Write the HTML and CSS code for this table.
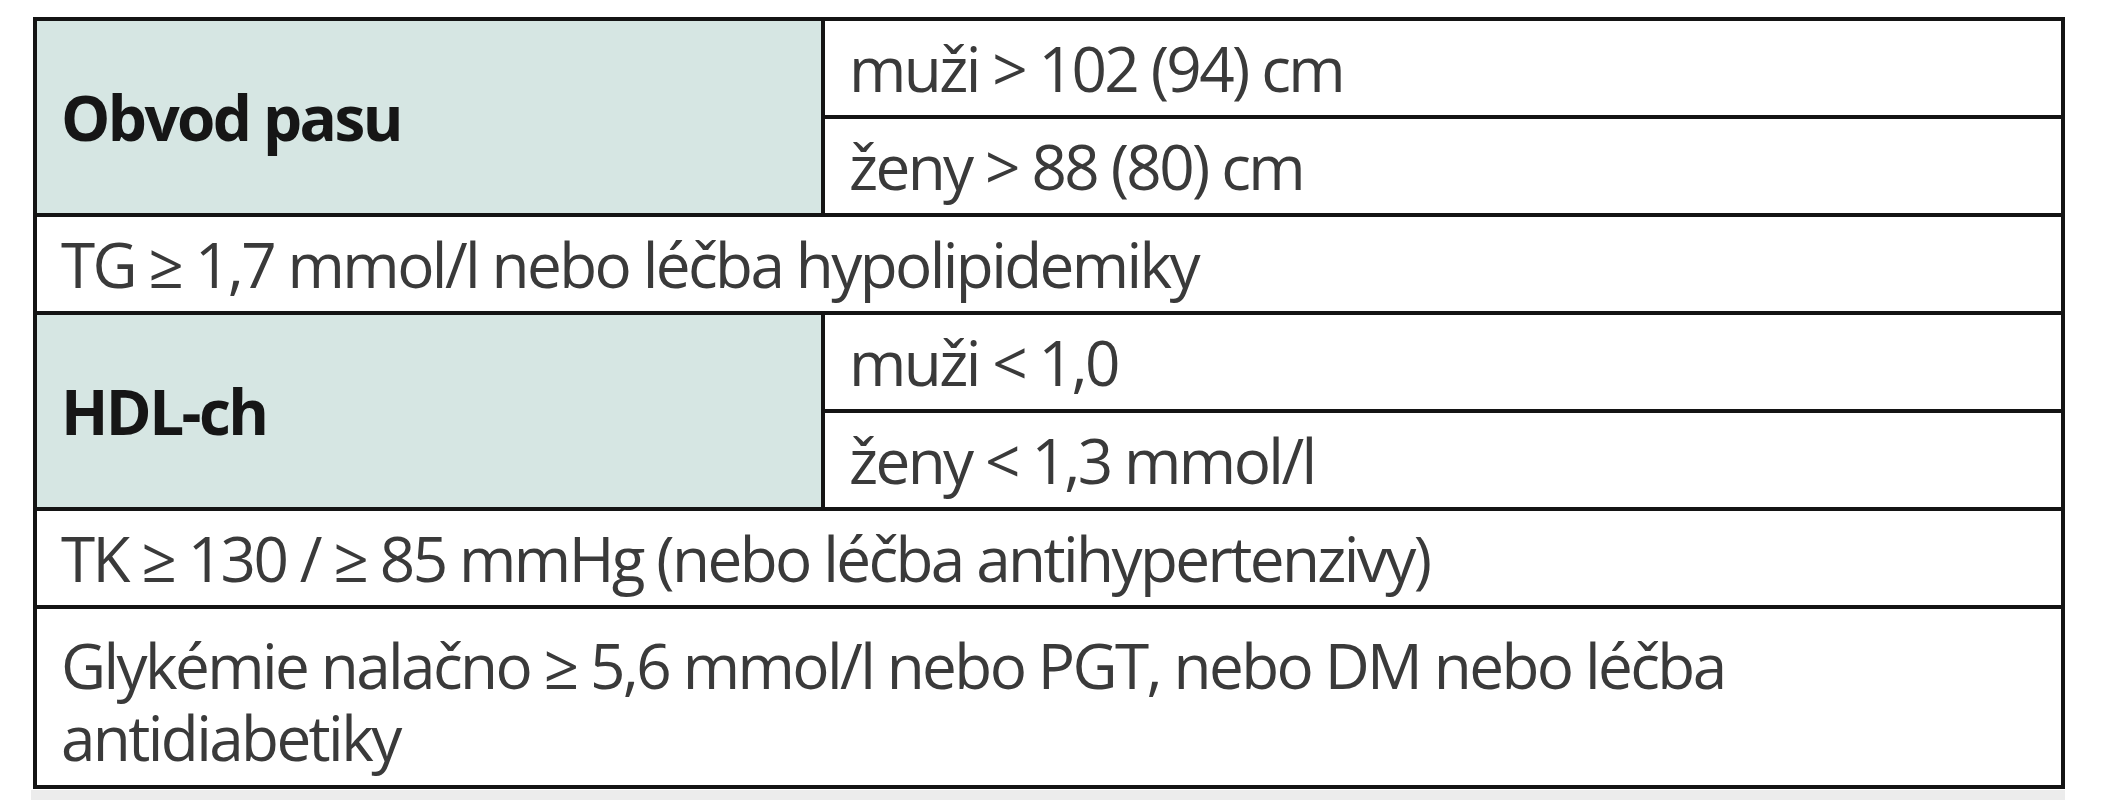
FILE: index.html
```html
<!DOCTYPE html>
<html lang="cs">
<head>
<meta charset="utf-8">
<title>Kritéria metabolického syndromu</title>
<link rel="stylesheet" href="styles.css">
</head>
<body>
<div class="page">
  <table class="criteria">
    <colgroup>
      <col class="col-label">
      <col class="col-value">
    </colgroup>
    <tbody>
      <tr>
        <td class="label" rowspan="2">Obvod pasu</td>
        <td>muži &gt; 102 (94) cm</td>
      </tr>
      <tr>
        <td>ženy &gt; 88 (80) cm</td>
      </tr>
      <tr>
        <td colspan="2">TG ≥ 1,7 mmol/l nebo léčba hypolipidemiky</td>
      </tr>
      <tr>
        <td class="label" rowspan="2">HDL-ch</td>
        <td>muži &lt; 1,0</td>
      </tr>
      <tr>
        <td>ženy &lt; 1,3 mmol/l</td>
      </tr>
      <tr>
        <td colspan="2">TK ≥ 130 / ≥ 85 mmHg (nebo léčba antihypertenzivy)</td>
      </tr>
      <tr>
        <td colspan="2" class="wrap">Glykémie nalačno ≥ 5,6 mmol/l nebo PGT, nebo DM nebo léčba<br>antidiabetiky</td>
      </tr>
    </tbody>
  </table>
  <div class="footer-band"></div>
</div>
</body>
</html>
```

FILE: styles.css
```css
html, body {
  margin: 0;
  padding: 0;
  background: #ffffff;
}

.page {
  padding: 17px 0 0 33px;
}

.criteria {
  border-collapse: collapse;
  table-layout: fixed;
  width: 2028px;
  font-family: "Open Sans", "Noto Sans", "DejaVu Sans", sans-serif;
}

.col-label {
  width: 788px;
}

.col-value {
  width: 1240px;
}

.criteria td {
  border: 4px solid #141414;
  padding: 13px 24px;
  font-size: 62px;
  line-height: 68px;
  letter-spacing: -2.6px;
  color: #3a3a3a;
  white-space: nowrap;
  background: #ffffff;
  vertical-align: middle;
}

.criteria td.label {
  background: #d6e6e3;
  color: #161616;
  font-weight: 700;
  letter-spacing: -2.6px;
}

.criteria td.wrap {
  padding: 20px 24px 12px;
  line-height: 72px;
  vertical-align: top;
}

.footer-band {
  width: 2034px;
  height: 12px;
  margin: 1px 0 0 -2px;
  background: #ececec;
}
```
